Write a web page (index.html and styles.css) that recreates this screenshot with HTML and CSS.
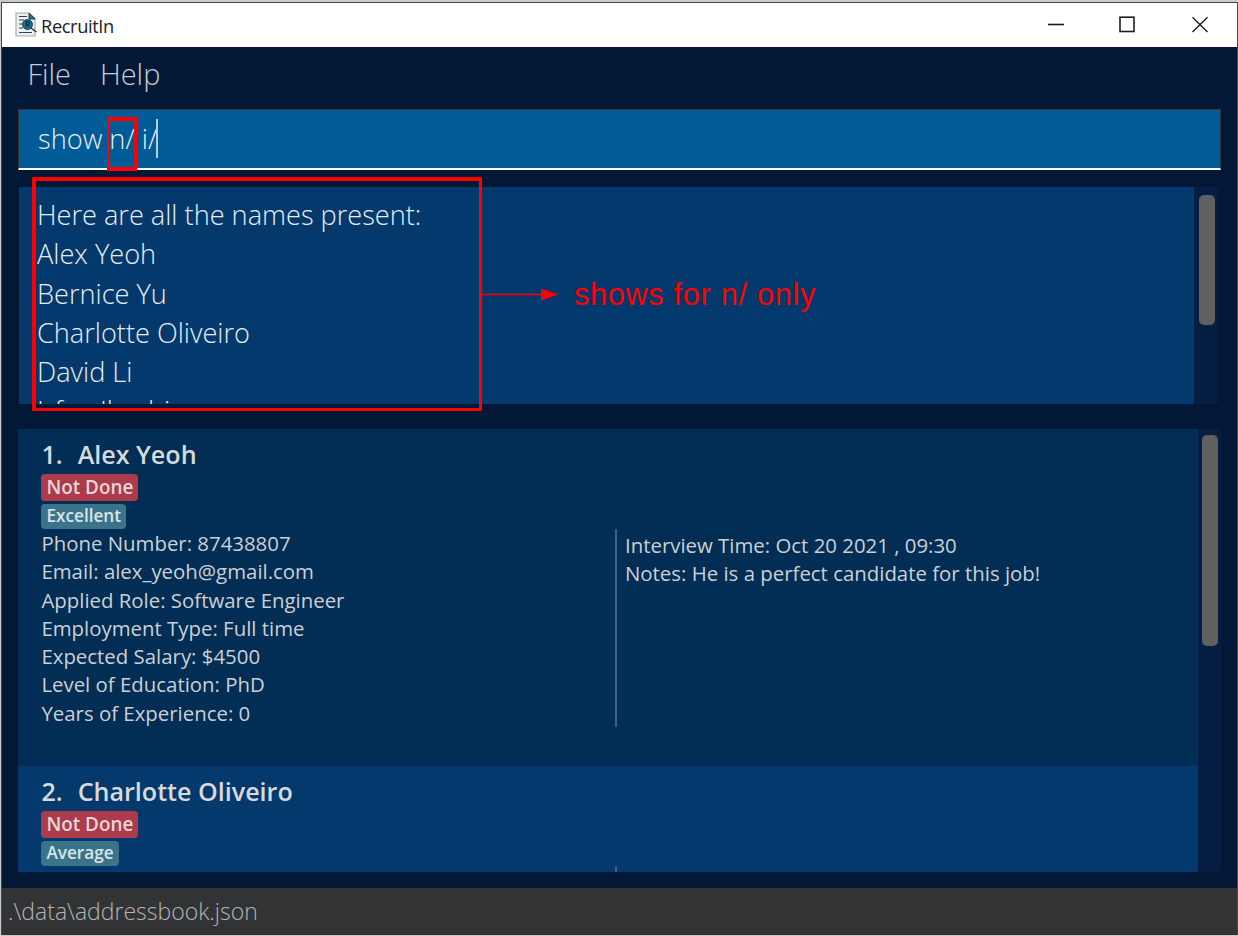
FILE: index.html
```html
<!DOCTYPE html>
<html lang="en">
<head>
<meta charset="utf-8">
<title>RecruitIn</title>
<link rel="stylesheet" href="styles.css">
</head>
<body>
<div class="window">
  <header class="titlebar">
    <svg class="app-icon" width="22" height="26" viewBox="0 0 22 26">
      <path d="M1 1H14L20 6V24H1Z" fill="#eceff0" stroke="#aaaeb0" stroke-width="1.2"/>
      <path d="M14 1L20 7H14Z" fill="#087ca4" stroke="#29434f"/>
      <path d="M4 4.5H12M4 8H9M4 12H8M4 16H8M4 20.5H17" stroke="#384147" stroke-width="1.1"/>
      <circle cx="12.5" cy="12.5" r="4.9" fill="#087ca4" stroke="#20333e"/>
      <path d="M11.2 15.5V9.8H13Q15 10 14.5 11.5Q14 12.8 11.5 12.7M13 12.8L14.5 15.2M16 16L21.5 20" fill="none" stroke="#162c38" stroke-width="1.3"/>
    </svg>
    <span class="app-name">RecruitIn</span>
    <svg class="controls" width="164" height="20" viewBox="0 0 164 20" fill="none" stroke="#1c1c1c" stroke-width="1.6">
      <path d="M1 10.5H17"/>
      <rect x="73" y="3.2" width="14" height="14.3"/>
      <path d="M145.5 3.2L160.5 18M160.5 3.2L145.5 18" stroke-width="1.4"/>
    </svg>
  </header>
  <nav class="menu"><span>File</span><span>Help</span></nav>
  <div class="command">
    <span>show n/ i/</span><span class="caret"></span>
  </div>
  <section class="result">
    <div class="result-text">
      <p>Here are all the names present:</p>
      <p>Alex Yeoh</p>
      <p>Bernice Yu</p>
      <p>Charlotte Oliveiro</p>
      <p>David Li</p>
      <p>Irfan Ibrahim</p>
    </div>
    <div class="scroll"><div class="thumb"></div></div>
  </section>
  <section class="list">
    <div class="cards">
      <article class="card">
        <div class="person">
          <h2><span>1.</span><span>Alex Yeoh</span></h2>
          <div class="tag undone">Not Done</div>
          <div class="tag rating">Excellent</div>
          <p>Phone Number: 87438807</p>
          <p>Email: alex_yeoh@gmail.com</p>
          <p>Applied Role: Software Engineer</p>
          <p>Employment Type: Full time</p>
          <p>Expected Salary: $4500</p>
          <p>Level of Education: PhD</p>
          <p>Years of Experience: 0</p>
        </div>
        <div class="interview">
          <p>Interview Time: Oct 20 2021 , 09:30</p>
          <p>Notes: He is a perfect candidate for this job!</p>
        </div>
      </article>
      <article class="card alt">
        <div class="person">
          <h2><span>2.</span><span>Charlotte Oliveiro</span></h2>
          <div class="tag undone">Not Done</div>
          <div class="tag rating">Average</div>
        </div>
        <div class="interview"></div>
      </article>
    </div>
    <div class="scroll"><div class="thumb"></div></div>
  </section>
  <footer class="status"><span>.\data\addressbook.json</span></footer>
  <div class="mark mark-prefix"></div>
  <div class="mark mark-result"></div>
  <div class="callout">
    <svg width="76" height="14" viewBox="0 0 76 14"><path d="M0 7.5H60" stroke="#f00" stroke-width="1.6"/><path d="M59 1.5L76 7.5L59 13.5Z" fill="#f00"/></svg>
    <span>shows for n/ only</span>
  </div>
</div>
</body>
</html>
```
FILE: styles.css
```css
* { box-sizing: border-box; }
body {
  margin: 0;
  width: 1238px;
  height: 936px;
  padding: 2px 0 0 1px;
  background: #c9cacb;
  font-family: "Open Sans", "Noto Sans", sans-serif;
  overflow: hidden;
}
p, h2 { margin: 0; }
.window {
  position: relative;
  display: flex;
  flex-direction: column;
  width: 1237px;
  height: 933px;
  border: 1px solid #464749;
  border-bottom: 0;
  background: #021836;
  white-space: nowrap;
}
.titlebar {
  display: flex;
  align-items: center;
  flex: 0 0 44px;
  padding: 0 26px 0 13px;
  background: #fff;
}
.app-icon { margin-top: -1px; }
.app-name { margin: 0 0 0 4px; font: 18.3px "Open Sans"; color: #222; letter-spacing: -0.4px; }
.controls { margin: -2px 0 0 auto; }
.menu {
  display: flex;
  flex: 0 0 62px;
  padding: 7px 0 0 25.5px;
  gap: 29px;
  color: #c7ccd5;
  font-weight: 300;
  font-size: 28.9px;
  line-height: 40px;
}
.command {
  display: flex;
  align-items: center;
  flex: 0 0 61px;
  margin: 0 16px;
  padding: 0 0 1px 19px;
  background: #005b96;
  border: 1px solid #383838;
  border-bottom: 2px solid #fff;
  color: #e4edf4;
  font-weight: 300;
  font-size: 27.2px;
}
.caret { width: 2px; height: 39px; margin-left: -1px; background: #b5cfe0; }
.result { display: flex; flex: 0 0 217px; margin: 17px 19px 0 17px; overflow: hidden; }
.result-text {
  flex: 1;
  padding: 8px 0 0 18px;
  background: #03396c;
  color: #e9edf1;
  font-weight: 300;
  font-size: 27.15px;
  line-height: 39.25px;
}
.scroll { flex: 0 0 24px; padding: 8px 3px 0 5px; background: #061e42; border-radius: 0 3px 3px 0; }
.thumb { height: 130px; border-radius: 5px; background: #606060; }
.list { display: flex; flex: 0 0 443px; margin: 25px 16px 0; overflow: hidden; }
.list .scroll { flex-basis: 23px; padding: 6px 3px 0 4px; }
.list .thumb { height: 211px; }
.cards { flex: 1; }
.card {
  display: grid;
  grid-template-columns: 573.6px 1fr;
  height: 337px;
  padding: 7px 0 0 23.4px;
  background: #022d55;
  color: #ccd0d4;
  font-size: 20.4px;
  line-height: 28.25px;
}
.card.alt { background: #03396c; }
h2 { display: flex; gap: 15px; height: 38px; font-size: 25.1px; font-weight: 600; line-height: 37px; color: #d8d9dc; }
.tag { width: max-content; padding: 0 5px; border-radius: 4px; font-weight: 600; }
.undone { height: 27px; margin-bottom: 3px; background: #ac3c4b; color: #e8d5da; font-size: 18.9px; line-height: 26px; }
.rating { height: 25px; background: #3b748a; color: #d8e4e8; font-size: 17.2px; line-height: 23px; }
.interview { height: 198px; margin-top: 93px; padding: 2px 0 0 8px; border-left: 2px solid #47617d; }
.status {
  flex: 0 0 47px;
  margin-top: 16px;
  padding: 4px 0 0 6px;
  background: #323335;
  color: #b4b4b5;
  font-weight: 300;
  font-size: 23px;
  line-height: 38px;
}
/* Annotations drawn over the window */
.mark { position: absolute; border: 3px solid #f00; }
.mark-prefix { left: 105px; top: 114px; width: 30px; height: 54px; border-width: 4px 3px; }
.mark-result { left: 30px; top: 174px; width: 450px; height: 234px; border-width: 4px 3px 3px 4px; border-radius: 1px; }
.callout {
  position: absolute;
  left: 480px;
  top: 274px;
  display: flex;
  align-items: center;
  gap: 16px;
  height: 34px;
  color: #f00;
  font: 30.5px/36px "Liberation Sans", sans-serif;
  letter-spacing: 0.77px;
}
```
